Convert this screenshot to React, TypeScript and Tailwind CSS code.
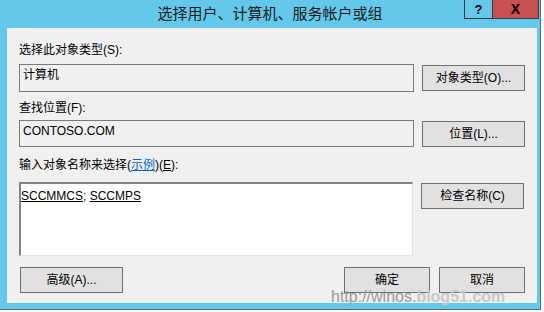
import React from "react";

const font = { fontFamily: '"Liberation Sans", "Noto Sans CJK SC", sans-serif' };

const DlgButton = ({ label, className = "" }: { label: string; className?: string }) => (
  <button
    className={`h-[26px] bg-[#e1e1e1] border border-[#707070] text-[12px] text-black leading-none flex items-center justify-center ${className}`}
  >
    {label}
  </button>
);

const ReadonlyBox = ({ value, h }: { value: string; h: string }) => (
  <div className={`w-[395px] ${h} border border-[#7a7a7a] bg-[#f0f0f0] pl-[3px] pt-[2px] text-[12px] leading-[16px] text-black`}>
    {value}
  </div>
);

export default function App() {
  return (
    <div className="w-[544px] h-[312px] bg-white relative overflow-hidden" style={font}>
      <div className="w-[541px] h-[310px] bg-[#63c8ea] border-r border-b border-[#5e6a70] flex flex-col">
        {/* title bar */}
        <div className="relative h-[28px] flex items-center justify-center">
          <span className="text-[15px] text-[#1a1a1a] pt-[1px]">选择用户、计算机、服务帐户或组</span>
          <div className="absolute top-0 right-[1px] flex">
            <div className="w-[29px] h-[19px] border border-t-0 border-[#3a3a3a] bg-[#63c8ea] flex items-center justify-center text-[13px] font-bold text-black leading-none">
              ?
            </div>
            <div className="w-[46px] h-[19px] border border-t-0 border-l-0 border-[#3a3a3a] bg-[#c75050] flex items-center justify-center text-[14px] font-bold text-black leading-none">
              X
            </div>
          </div>
        </div>

        {/* client area */}
        <div className="ml-[7px] w-[530px] h-[275px] bg-[#f0f0f0] px-[12px] pt-[14px] flex flex-col text-[12px] leading-[16px] text-black">
          <div className="h-[16px]">选择此对象类型(S):</div>
          <div className="mt-[6px] flex items-center gap-[8px]">
            <ReadonlyBox value="计算机" h="h-[28px]" />
            <DlgButton label="对象类型(O)..." className="w-[103px]" />
          </div>

          <div className="mt-[8px] h-[16px]">查找位置(F):</div>
          <div className="mt-[4px] flex items-center gap-[8px]">
            <ReadonlyBox value="CONTOSO.COM" h="h-[27px]" />
            <DlgButton label="位置(L)..." className="w-[103px]" />
          </div>

          <div className="mt-[10px] h-[16px]">
            输入对象名称来选择(<span className="text-[#0066cc] underline">示例</span>)(<span className="underline">E</span>):
          </div>
          <div className="mt-[9px] flex items-start gap-[8px]">
            <div className="w-[394px] h-[74px] bg-white border-t-2 border-l-2 border-[#838383] border-r border-b border-r-[#e3e3e3] border-b-[#e3e3e3] pt-[4px] text-[12px] leading-[16px]">
              <span className="underline">SCCMMCS</span>; <span className="underline">SCCMPS</span>
            </div>
            <DlgButton label="检查名称(C)" className="w-[103px] mt-[1px]" />
          </div>

          <div className="mt-[11px] flex items-center">
            <DlgButton label="高级(A)..." className="w-[103px] ml-[1px]" />
            <div className="flex-1" />
            <DlgButton label="确定" className="w-[86px]" />
            <DlgButton label="取消" className="w-[86px] ml-[9px]" />
          </div>
        </div>
      </div>

      {/* watermark */}
      <div className="absolute left-[331px] top-[287px] text-[16px] leading-[20px] whitespace-nowrap">
        <span className="text-[#9a9a9a]">http://winos.</span>
        <span className="text-[#c9c9c9] font-bold">blog51.com</span>
      </div>
    </div>
  );
}
